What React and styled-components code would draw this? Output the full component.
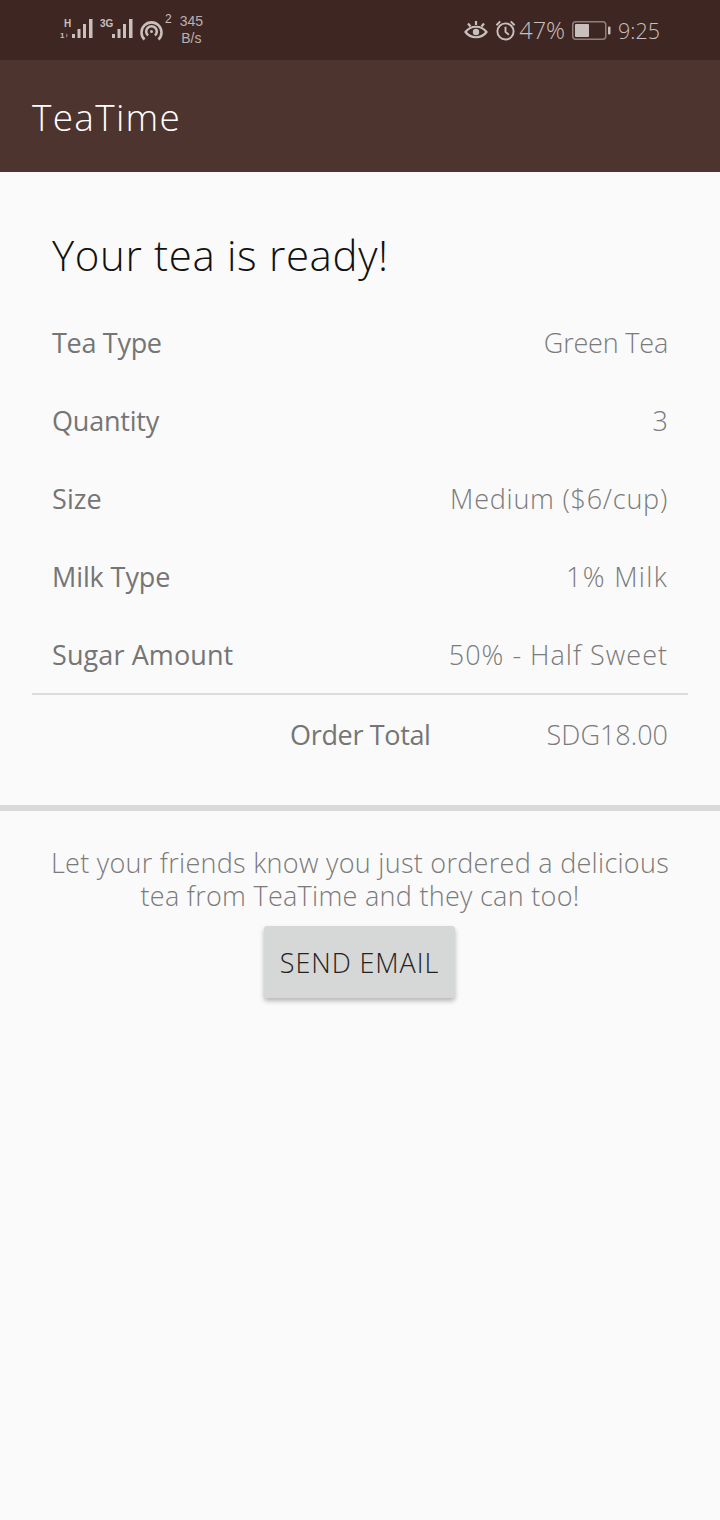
import React from "react";
import styled, { createGlobalStyle } from "styled-components";

const Global = createGlobalStyle`
  html, body {
    margin: 0;
    padding: 0;
    background: #fafafa;
  }
  body {
    font-family: "Open Sans", "Noto Sans", sans-serif;
  }
`;

const Page = styled.div`
  width: 720px;
  height: 1520px;
  background: #fafafa;
  overflow: hidden;
`;

const StatusBar = styled.div`
  height: 60px;
  background: #3e2723;
  color: #c9bfbc;
  display: flex;
  justify-content: space-between;
  align-items: center;
  padding: 0 60px;
`;

const StatusGroup = styled.div`
  display: flex;
  align-items: center;
  gap: ${(props) => props.$gap || 7}px;
`;

const Speed = styled.div`
  font-size: 14px;
  line-height: 17px;
  text-align: center;
  font-family: "Liberation Sans", sans-serif;
  margin: 0 0 0 1px;
  opacity: 0.9;
`;

const HotspotCount = styled.span`
  font-size: 12px;
  line-height: 1;
  align-self: flex-start;
  margin: 0 0 0 -5px;
  font-family: "Liberation Sans", sans-serif;
`;

const StatusText = styled.span`
  font-size: ${(props) => props.$size || 23.5}px;
  font-weight: 300;
`;

const AppBar = styled.header`
  height: 112px;
  background: #4e342e;
  display: flex;
  align-items: center;
  padding-left: 32px;
`;

const AppTitle = styled.h1`
  margin: 0;
  color: #fff;
  font-size: 37px;
  font-weight: 300;
  letter-spacing: 1.3px;
`;

const Summary = styled.section`
  padding: 55px 32px 0;
  height: 639px;
  box-sizing: border-box;
  border-bottom: 6px solid #d9d9d9;
`;

const Heading = styled.h2`
  margin: 0 20px 20px;
  font-size: 42px;
  line-height: 56px;
  font-weight: 300;
  color: #111;
  letter-spacing: 0.65px;
`;

const Rows = styled.div`
  padding: 0 20px;
`;

const Row = styled.div`
  height: 78px;
  display: flex;
  justify-content: space-between;
  align-items: center;
`;

const Label = styled.span`
  font-size: 27px;
  color: #757575;
  letter-spacing: ${(props) => props.$track || 0}px;
`;

const Value = styled.span`
  font-size: 27px;
  font-weight: 300;
  color: #7b7b7b;
  letter-spacing: ${(props) => props.$track || 0}px;
`;

const Rule = styled.div`
  height: 2px;
  background: #dcdcdc;
`;

const TotalRow = styled.div`
  display: flex;
  justify-content: flex-end;
  align-items: center;
  height: 78px;
  padding-right: 20px;
  gap: 116px;
`;

const Share = styled.section`
  display: flex;
  flex-direction: column;
  align-items: center;
  padding-top: 35px;
`;

const ShareText = styled.p`
  margin: 0 0 14px;
  width: 660px;
  font-size: 27px;
  line-height: 33px;
  font-weight: 300;
  color: #7b7b7b;
  text-align: center;
  letter-spacing: 0.28px;
`;

const SendButton = styled.button`
  width: 191px;
  height: 72px;
  margin-right: 1px;
  border: 0;
  border-radius: 3px;
  background: #d6d7d7;
  color: #222;
  font-family: inherit;
  font-size: 27px;
  font-weight: 300;
  letter-spacing: 0.9px;
  box-shadow: 0 3px 5px rgba(0, 0, 0, 0.28);
  padding: 0;
`;

const Bars = ({ label, small }) => (
  <svg width="33" height="24" viewBox="0 0 33 24">
    <g fill="#c9bfbc">
      {small ? (
        <>
          <text x="4" y="9" fontSize="10" fontWeight="700" fontFamily="Liberation Sans">
            {label}
          </text>
          <text x="0" y="20" fontSize="8" fontWeight="700" fontFamily="Liberation Sans">
            1
          </text>
          <path d="M6 20v-5l2 2.500z" opacity="0.5" />
        </>
      ) : (
        <text x="0" y="9" fontSize="10" fontWeight="700" fontFamily="Liberation Sans">
          {label}
        </text>
      )}
      <rect x="12" y="16" width="3" height="4" />
      <rect x="17.500" y="11" width="3" height="9" />
      <rect x="23" y="6" width="3" height="14" />
      <rect x="29" y="1" width="3.500" height="19" />
    </g>
  </svg>
);

const HotspotIcon = () => (
  <svg width="23" height="21" viewBox="0 0 23 21" fill="none" stroke="#c9bfbc" strokeWidth="2.600">
    <path d="M4.500 19.500a10 10 0 1 1 14 0" />
    <path d="M8 15.500a5.300 5.300 0 1 1 7 0" />
    <circle cx="11.500" cy="11.500" r="1.500" fill="#c9bfbc" stroke="none" />
  </svg>
);

const EyeIcon = () => (
  <svg width="24" height="20" viewBox="0 0 24 20" fill="none" stroke="#c9bfbc" strokeWidth="2.200">
    <path d="M1.500 12c5-7 16-7 21 0c-5 7-16 7-21 0z" />
    <circle cx="12" cy="12" r="3.200" fill="#c9bfbc" stroke="none" />
    <path d="M4 3.500l2.500 3M12 1v4M20 3.500l-2.500 3" />
  </svg>
);

const AlarmIcon = () => (
  <svg width="21" height="21" viewBox="0 0 22 22" fill="none" stroke="#c9bfbc" strokeWidth="2">
    <circle cx="11" cy="12" r="8.500" />
    <path d="M11 7v5.500l3.500 3" />
    <path d="M1.500 5.500L5.500 1.500M20.500 5.500L16.500 1.500" />
  </svg>
);

const BatteryIcon = () => (
  <svg width="39" height="19" viewBox="0 0 39 19">
    <rect x="0.750" y="0.750" width="33" height="17.500" rx="3" fill="none" stroke="#8f7f7b" strokeWidth="1.500" />
    <rect x="3" y="3" width="14" height="13" rx="1" fill="#c9bfbc" />
    <rect x="36" y="5.500" width="2.500" height="8" rx="1" fill="#c9bfbc" />
  </svg>
);

const rows = [
  { label: "Tea Type", value: "Green Tea", labelTrack: -0.3, track: -0.2 },
  { label: "Quantity", value: "3", labelTrack: -0.2 },
  { label: "Size", value: "Medium ($6/cup)", labelTrack: 0.1, track: 0.75 },
  { label: "Milk Type", value: "1% Milk", labelTrack: -0.1, track: 1.3 },
  { label: "Sugar Amount", value: "50% - Half Sweet", labelTrack: 0.1, track: 1 },
];

export default function App() {
  return (
    <Page>
      <Global />
      <StatusBar>
        <StatusGroup>
          <Bars label="H" small />
          <Bars label="3G" />
          <HotspotIcon />
          <HotspotCount>2</HotspotCount>
          <Speed>
            345
            <br />
            B/s
          </Speed>
        </StatusGroup>
        <StatusGroup>
          <EyeIcon />
          <StatusGroup $gap={3}>
            <AlarmIcon />
            <StatusText>47%</StatusText>
          </StatusGroup>
          <BatteryIcon />
          <StatusText $size={21.5}>9:25</StatusText>
        </StatusGroup>
      </StatusBar>
      <AppBar>
        <AppTitle>TeaTime</AppTitle>
      </AppBar>
      <Summary>
        <Heading>Your tea is ready!</Heading>
        <Rows>
          {rows.map((row) => (
            <Row key={row.label}>
              <Label $track={row.labelTrack}>{row.label}</Label>
              <Value $track={row.track}>{row.value}</Value>
            </Row>
          ))}
        </Rows>
        <Rule />
        <TotalRow>
          <Label $track={-0.35}>Order Total</Label>
          <Value>SDG18.00</Value>
        </TotalRow>
      </Summary>
      <Share>
        <ShareText>
          Let your friends know you just ordered a delicious tea from TeaTime and they can too!
        </ShareText>
        <SendButton>SEND EMAIL</SendButton>
      </Share>
    </Page>
  );
}
